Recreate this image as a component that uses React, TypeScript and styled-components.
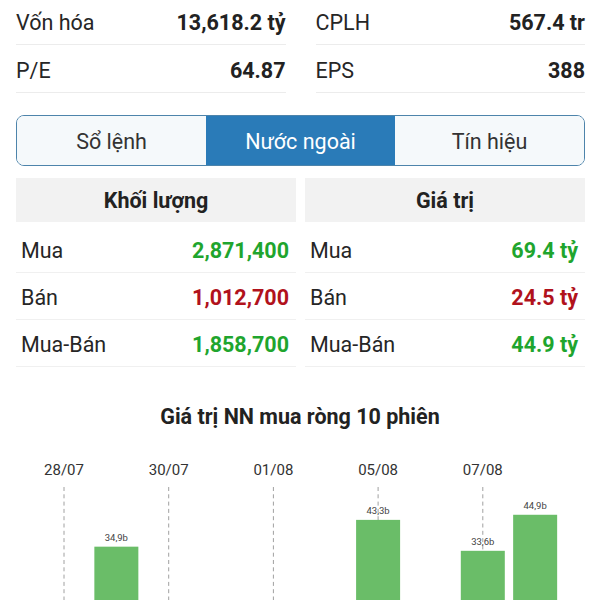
import React from "react";
import styled, { createGlobalStyle } from "styled-components";

const Global = createGlobalStyle`
  html, body { margin: 0; padding: 0; background: #ffffff; overflow: hidden; }
  body { font-family: Roboto, "Noto Sans", "Liberation Sans", sans-serif; color: #222; }
  * { box-sizing: border-box; }
`;

const Page = styled.div`
  width: 600px;
`;

const Padded = styled.div`
  padding: 0 15px 0 16px;
`;

const StatGrid = styled.div`
  display: grid;
  grid-template-columns: 1fr 1fr;
  column-gap: 30px;
  margin-top: -3px;
`;

const StatRow = styled.div`
  display: flex;
  justify-content: space-between;
  align-items: center;
  height: 48px;
  padding-top: 3px;
  border-bottom: 1px solid #ececec;
  font-size: 21.5px;
`;

const Label = styled.span`
  color: #262626;
`;

const Value = styled.span<{ $tone?: "up" | "down" }>`
  font-weight: 700;
  color: ${(p) => (p.$tone === "up" ? "#1fa52e" : p.$tone === "down" ? "#b1121c" : "#222")};
`;

const Tabs = styled.div`
  margin-top: 22px;
  display: flex;
  height: 51px;
  border: 1.5px solid #4d84ab;
  border-radius: 8px;
  overflow: hidden;
`;

const Tab = styled.div<{ $active?: boolean }>`
  flex: 1;
  display: flex;
  align-items: center;
  justify-content: center;
  padding-top: 2px;
  font-size: 21.5px;
  background: ${(p) => (p.$active ? "#2a7bb8" : "#f5f9fb")};
  color: ${(p) => (p.$active ? "#ffffff" : "#333")};
`;

const Tables = styled.div`
  display: grid;
  grid-template-columns: 1fr 1fr;
  column-gap: 9px;
  margin-top: 12px;
`;

const Table = styled.div``;

const TableHead = styled.div`
  height: 44px;
  background: #f2f2f2;
  display: flex;
  align-items: center;
  justify-content: center;
  font-size: 21.5px;
  font-weight: 700;
  color: #222;
  margin-bottom: 4px;
`;

const TableRow = styled(StatRow)`
  height: 47px;
  padding: 2px 7px 0 5px;
  border-bottom-color: #f0f0f0;
`;

const ChartTitle = styled.div`
  margin-top: 36px;
  text-align: center;
  font-size: 21.5px;
  line-height: 28px;
  font-weight: 700;
  color: #222;
`;

const ChartBox = styled.div`
  margin-top: 9px;
  height: 260px;
`;

const stats = [
  ["Vốn hóa", "13,618.2 tỷ", "CPLH", "567.4 tr"],
  ["P/E", "64.87", "EPS", "388"],
];

type Tone = "up" | "down";
const volume: [string, string, Tone][] = [
  ["Mua", "2,871,400", "up"],
  ["Bán", "1,012,700", "down"],
  ["Mua-Bán", "1,858,700", "up"],
];
const valueRows: [string, string, Tone][] = [
  ["Mua", "69.4 tỷ", "up"],
  ["Bán", "24.5 tỷ", "down"],
  ["Mua-Bán", "44.9 tỷ", "up"],
];

const sessions = [
  { d: "28/07", v: -12.4 },
  { d: "29/07", v: 34.9 },
  { d: "30/07", v: -8.2 },
  { d: "31/07", v: -20.5 },
  { d: "01/08", v: 0 },
  { d: "02/08", v: -15.1 },
  { d: "05/08", v: 43.3 },
  { d: "06/08", v: -5.6 },
  { d: "07/08", v: 33.6 },
  { d: "08/08", v: 44.9 },
];

const X0 = 64;
const STEP = 52.35;
const ZERO = 218;
const SCALE = 3.19;
const BAR = 44;

function Chart() {
  return (
    <svg width={600} height={260} viewBox="0 0 600 260">
      {sessions.map((s, i) =>
        i % 2 === 0 ? (
          <g key={s.d}>
            <text
              x={X0 + i * STEP}
              y={34.5}
              textAnchor="middle"
              fontSize={15}
              fill="#333"
              fontFamily="Roboto, sans-serif"
            >
              {s.d}
            </text>
            <line
              x1={X0 + i * STEP}
              x2={X0 + i * STEP}
              y1={47}
              y2={260}
              stroke="#a0a0a0"
              strokeWidth={1}
              strokeDasharray="4 3.3"
            />
          </g>
        ) : null
      )}
      {sessions.map((s, i) => {
        const cx = X0 + i * STEP;
        if (s.v <= 0) {
          const h = -s.v * SCALE;
          return <rect key={s.d} x={cx - BAR / 2} y={ZERO} width={BAR} height={h} fill="#e57373" />;
        }
        const top = ZERO - s.v * SCALE;
        return (
          <g key={s.d}>
            <rect x={cx - BAR / 2} y={top} width={BAR} height={s.v * SCALE} fill="#6abd68" />
            <text
              x={cx}
              y={top - 6}
              textAnchor="middle"
              fontSize={9.5}
              fill="#444"
              fontFamily="Roboto, sans-serif"
            >
              {s.v.toFixed(1).replace(".", ",")}b
            </text>
          </g>
        );
      })}
    </svg>
  );
}

export default function App() {
  return (
    <Page>
      <Global />
      <Padded>
        <StatGrid>
          {stats.map(([l1, v1, l2, v2]) => (
            <React.Fragment key={l1}>
              <StatRow>
                <Label>{l1}</Label>
                <Value>{v1}</Value>
              </StatRow>
              <StatRow>
                <Label>{l2}</Label>
                <Value>{v2}</Value>
              </StatRow>
            </React.Fragment>
          ))}
        </StatGrid>
        <Tabs>
          <Tab>Sổ lệnh</Tab>
          <Tab $active>Nước ngoài</Tab>
          <Tab>Tín hiệu</Tab>
        </Tabs>
        <Tables>
          <Table>
            <TableHead>Khối lượng</TableHead>
            {volume.map(([l, v, t]) => (
              <TableRow key={l}>
                <Label>{l}</Label>
                <Value $tone={t}>{v}</Value>
              </TableRow>
            ))}
          </Table>
          <Table>
            <TableHead>Giá trị</TableHead>
            {valueRows.map(([l, v, t]) => (
              <TableRow key={l}>
                <Label>{l}</Label>
                <Value $tone={t}>{v}</Value>
              </TableRow>
            ))}
          </Table>
        </Tables>
      </Padded>
      <ChartTitle>Giá trị NN mua ròng 10 phiên</ChartTitle>
      <ChartBox>
        <Chart />
      </ChartBox>
    </Page>
  );
}
